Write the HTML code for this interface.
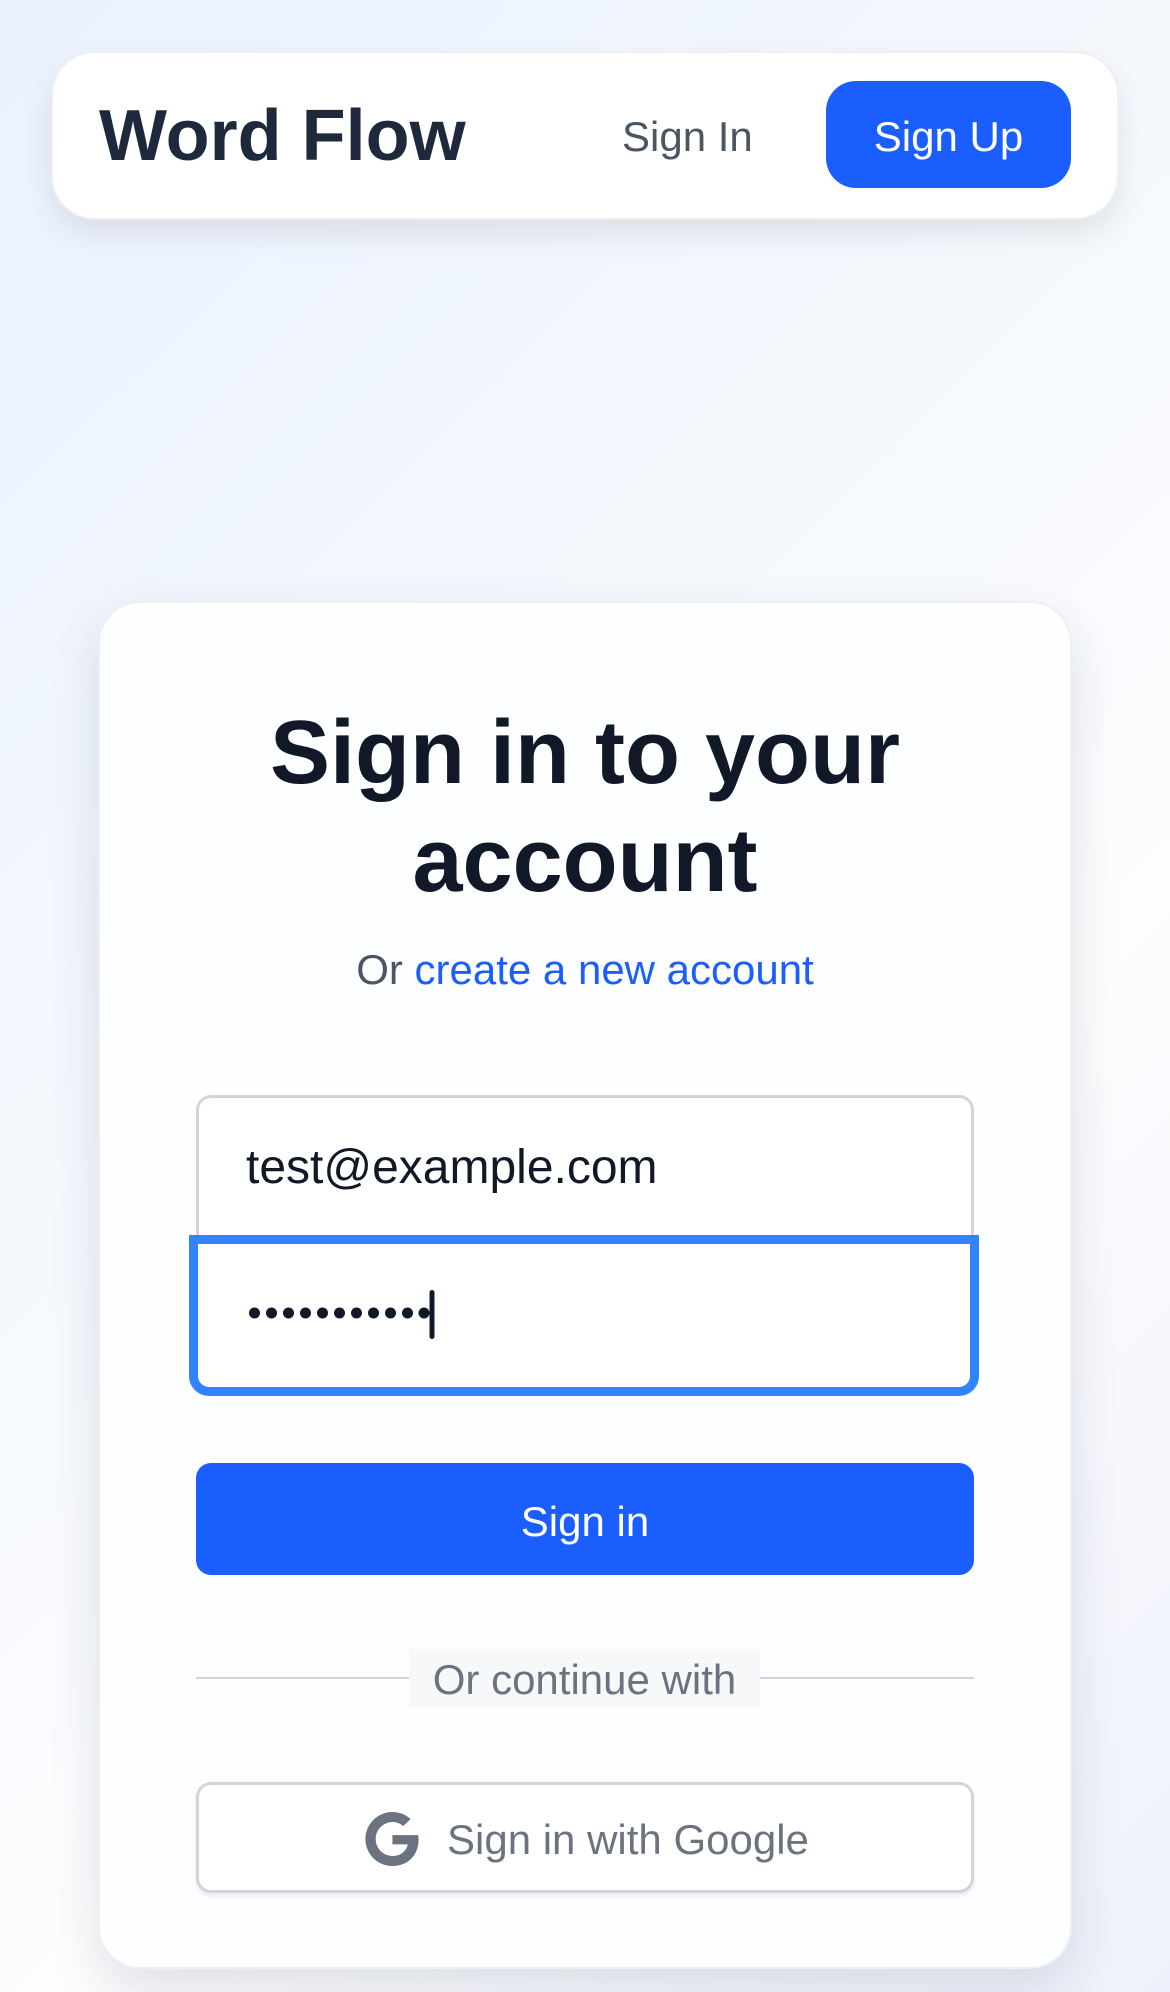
<!DOCTYPE html>
<html><head><meta charset="utf-8"><style>
*{margin:0;padding:0;box-sizing:border-box}
html,body{width:1170px;height:1992px;overflow:hidden}
body{font-family:"Liberation Sans",sans-serif;background:linear-gradient(135deg,#eaf2fe 0%,#f6f9fd 45%,#fdfdfe 65%,#eef1fb 100%);position:relative}
.a{position:absolute;white-space:nowrap;line-height:1}
.nav{position:absolute;left:51px;top:51px;width:1068px;height:169px;background:#fff;border:2px solid #efefef;border-radius:44px;box-shadow:0 14px 30px rgba(0,0,0,.09)}
.card{position:absolute;left:98px;top:601px;width:974px;height:1368px;background:#fdfeff;border:2px solid #eeeff1;border-radius:42px;box-shadow:0 20px 50px rgba(20,30,60,.12)}
</style></head><body>
<div class="nav"></div>
<div class="a" style="left:99px;top:100px;font-size:72px;font-weight:bold;color:#1e293b">Word Flow</div>
<div class="a" style="left:622px;top:116px;font-size:42px;color:#4b5563">Sign In</div>
<div style="position:absolute;left:826px;top:81px;width:245px;height:107px;background:#1a5efe;border-radius:30px"></div>
<div class="a" style="left:826px;width:245px;text-align:center;top:116px;font-size:42px;color:#fff">Sign Up</div>

<div class="card"></div>
<div class="a" style="left:98px;width:974px;text-align:center;top:699px;font-size:90px;line-height:108px;font-weight:bold;color:#111827;white-space:normal">Sign in to your<br>account</div>
<div class="a" style="left:98px;width:974px;text-align:center;top:949px;font-size:42px;color:#4b5563">Or <span style="color:#1a5efe">create a new account</span></div>

<div style="position:absolute;left:196px;top:1095px;width:778px;height:150px;background:#fff;border:3px solid #d1d5db;border-bottom:none;border-radius:15px 15px 0 0"></div>
<div class="a" style="left:246px;top:1144px;font-size:48px;color:#111827">test@example.com</div>
<div style="position:absolute;left:189px;top:1235px;width:790px;height:161px;background:#fff;border:9px solid #3183fa;border-radius:0 0 20px 20px"></div>
<svg style="position:absolute;left:240px;top:1285px" width="200" height="60">
<g fill="#111827">
<circle cx="14.5" cy="28" r="5.5"/><circle cx="31.5" cy="28" r="5.5"/><circle cx="48.5" cy="28" r="5.5"/><circle cx="65.5" cy="28" r="5.5"/><circle cx="82.5" cy="28" r="5.5"/><circle cx="99.5" cy="28" r="5.5"/><circle cx="116.5" cy="28" r="5.5"/><circle cx="133.5" cy="28" r="5.5"/><circle cx="150.5" cy="28" r="5.5"/><circle cx="167.5" cy="28" r="5.5"/><circle cx="184" cy="28" r="5.5"/>
<rect x="189.5" y="5" width="5" height="49" rx="2.5"/></g></svg>

<div style="position:absolute;left:196px;top:1463px;width:778px;height:112px;background:#1a5efe;border-radius:15px"></div>
<div class="a" style="left:196px;width:778px;text-align:center;top:1501px;font-size:42px;color:#fff">Sign in</div>

<div style="position:absolute;left:196px;top:1677px;width:778px;height:2px;background:#d1d5db"></div>
<div style="position:absolute;left:409px;top:1649px;width:351px;height:60px;background:#f7f8fa"></div>
<div class="a" style="left:409px;width:351px;text-align:center;top:1659px;font-size:42px;color:#6b7280">Or continue with</div>

<div style="position:absolute;left:196px;top:1782px;width:778px;height:111px;background:#fff;border:3px solid #d1d5db;border-radius:15px;box-shadow:0 3px 4px rgba(0,0,0,.08)"></div>
<svg style="position:absolute;left:365px;top:1812px" width="54" height="54" viewBox="0 8 488 496"><path fill="#6b7280" d="M488 261.8C488 403.3 391.1 504 248 504 110.8 504 0 393.2 0 256S110.8 8 248 8c66.8 0 123 24.5 166.3 64.9l-67.5 64.9C258.5 52.6 94.3 116.6 94.3 256c0 86.5 69.1 156.6 153.7 156.6 98.2 0 135-70.4 140.8-106.900H248v-85.3h236.1c2.3 12.7 3.900 24.9 3.900 41.4z"/></svg>
<div class="a" style="left:447px;top:1819px;font-size:42px;color:#6b7280">Sign in with Google</div>
</body></html>
